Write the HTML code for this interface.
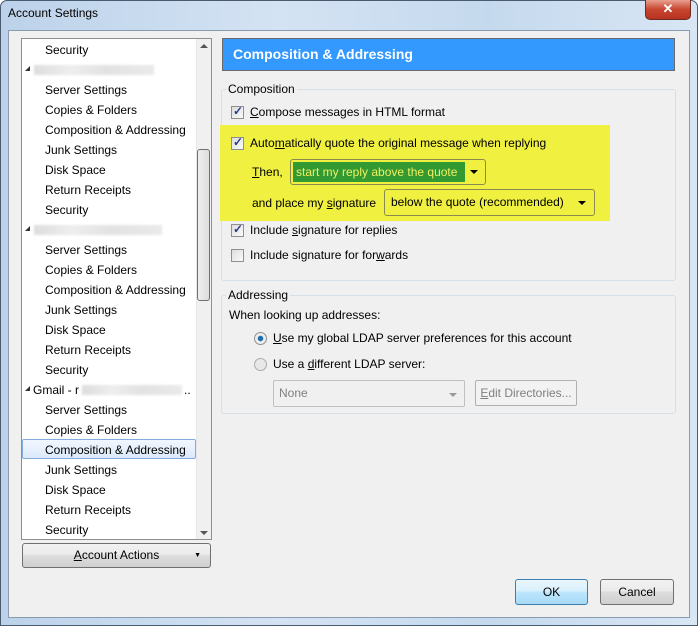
<!DOCTYPE html><html><head><style>
*{box-sizing:border-box;margin:0;padding:0}
body{width:698px;height:626px;overflow:hidden;background:#fff;font-family:"Liberation Sans",sans-serif;font-size:12px;color:#000;position:relative}
.a{position:absolute}
.frame{left:0;top:0;width:698px;height:626px;border:1px solid #4a5b70;border-radius:7px 7px 0 0;background:linear-gradient(90deg,#bcd2ea,#d4e3f3 40%,#c5d9ee 70%,#d8e6f4)}
.client{left:8px;top:30px;width:682px;height:588px;background:#f0f0f0;border:1px solid #8a9bb0}
.tree{left:21px;top:38px;width:191px;height:502px;background:#fff;border:1px solid #8e8f8f}
.row{position:absolute;left:23px;height:20px;line-height:20px;font-size:12px}
.hdr{position:absolute;left:12px;height:10px;width:120px;background:linear-gradient(90deg,#ddd,#eee 30%,#e2e2e2 60%,#eaeaea);filter:blur(1px)}
.tri{position:absolute;left:3px;width:0;height:0;border-left:5px solid transparent;border-bottom:5px solid #333}
.btn{border:1px solid #707070;border-radius:3px;background:linear-gradient(#f2f2f2,#ebebeb 45%,#dddddd 50%,#cfcfcf);text-align:center}
.cb{position:absolute;width:13px;height:13px;border:1px solid #8e8f8f;background:linear-gradient(135deg,#ddd,#fafafa)}
.cb.c::after{content:"✓";position:absolute;left:1px;top:-3px;font-size:12px;color:#2a3a8a;font-weight:bold}
.grp{border:1px solid #d5dfe5;border-radius:3px}
u{text-decoration:underline}
</style></head><body>
<div class="a frame"></div>
<div class="a" style="left:8px;top:6px;font-size:12px;">Account Settings</div>
<div class="a" style="left:645px;top:0;width:46px;height:20px;border:1px solid #6d2a22;border-top:none;border-radius:0 0 5px 5px;background:linear-gradient(#e8a090,#c7452f 50%,#b83220);color:#fff;text-align:center;font-weight:bold;font-size:13px;line-height:18px">✕</div>
<div class="a client"></div>

<div class="a tree">
 <div class="row" style="top:1px">Security</div>
 <div class="tri" style="top:27px"></div><div class="hdr" style="top:26px"></div>
 <div class="row" style="top:41px">Server Settings</div>
 <div class="row" style="top:61px">Copies &amp; Folders</div>
 <div class="row" style="top:81px">Composition &amp; Addressing</div>
 <div class="row" style="top:101px">Junk Settings</div>
 <div class="row" style="top:121px">Disk Space</div>
 <div class="row" style="top:141px">Return Receipts</div>
 <div class="row" style="top:161px">Security</div>
 <div class="tri" style="top:187px"></div><div class="hdr" style="top:186px;width:128px"></div>
 <div class="row" style="top:201px">Server Settings</div>
 <div class="row" style="top:221px">Copies &amp; Folders</div>
 <div class="row" style="top:241px">Composition &amp; Addressing</div>
 <div class="row" style="top:261px">Junk Settings</div>
 <div class="row" style="top:281px">Disk Space</div>
 <div class="row" style="top:301px">Return Receipts</div>
 <div class="row" style="top:321px">Security</div>
 <div class="tri" style="top:347px"></div><div class="row" style="top:341px;left:11px">Gmail - r</div><div class="hdr" style="top:346px;left:60px;width:100px"></div><div class="row" style="top:341px;left:162px">..</div>
 <div class="row" style="top:361px">Server Settings</div>
 <div class="row" style="top:381px">Copies &amp; Folders</div>
 <div class="a" style="left:0;top:400px;width:174px;height:20px;border:1px solid #84acdd;border-radius:2px;background:linear-gradient(#f2f7fe,#dbe9fb)"></div>
 <div class="row" style="top:401px">Composition &amp; Addressing</div>
 <div class="row" style="top:421px">Junk Settings</div>
 <div class="row" style="top:441px">Disk Space</div>
 <div class="row" style="top:461px">Return Receipts</div>
 <div class="row" style="top:481px">Security</div>
 <div class="a" style="left:174px;top:0;width:15px;height:500px;background:#f0f0f0;border-left:1px solid #e6e6e6"></div>
 <div class="a" style="left:178px;top:5px;border-left:4px solid transparent;border-right:4px solid transparent;border-bottom:4px solid #555"></div>
 <div class="a" style="left:178px;top:492px;border-left:4px solid transparent;border-right:4px solid transparent;border-top:4px solid #555"></div>
 <div class="a btn" style="left:175px;top:110px;width:13px;height:152px;background:linear-gradient(90deg,#eee,#ddd)"></div>
</div>
<div class="a btn" style="left:22px;top:543px;width:189px;height:25px;line-height:23px"><u>A</u>ccount Actions<span style="position:absolute;right:9px;top:0;font-size:7px">▼</span></div>

<div class="a" style="left:222px;top:38px;width:453px;height:33px;background:#3399ff;border:1px solid #6a6a6a;color:#fff;font-weight:bold;font-size:14px;line-height:31px;padding-left:10px">Composition &amp; Addressing</div>

<div class="a grp" style="left:221px;top:89px;width:455px;height:192px"></div>
<div class="a" style="left:226px;top:82px;background:#f0f0f0;padding:0 2px">Composition</div>
<div class="cb c" style="left:231px;top:106px"></div>
<div class="a" style="left:250px;top:105px"><u>C</u>ompose messages in HTML format</div>
<div class="a" style="left:220px;top:125px;width:390px;height:96px;background:#eff03f"></div>
<div class="cb c" style="left:231px;top:137px"></div>
<div class="a" style="left:250px;top:136px">Auto<u>m</u>atically quote the original message when replying</div>
<div class="a" style="left:252px;top:165px"><u>T</u>hen,</div>
<div class="a" style="left:290px;top:159px;width:196px;height:26px;border:1px solid #8a8a50;border-radius:3px"></div>
<div class="a" style="left:293px;top:162px;width:172px;height:20px;background:#339933;color:#f0f060;line-height:20px;padding-left:3px;font-size:12px">start my reply above the quote</div>
<div class="a" style="left:470px;top:170px;border-left:4px solid transparent;border-right:4px solid transparent;border-top:4px solid #000"></div>
<div class="a" style="left:252px;top:196px">and place my <u>s</u>ignature</div>
<div class="a" style="left:384px;top:189px;width:211px;height:27px;border:1px solid #8a8a50;border-radius:3px;line-height:25px;padding-left:6px">below the quote (recommended)</div>
<div class="a" style="left:578px;top:201px;border-left:4px solid transparent;border-right:4px solid transparent;border-top:4px solid #000"></div>
<div class="cb c" style="left:231px;top:224px"></div>
<div class="a" style="left:250px;top:223px">Include <u>s</u>ignature for replies</div>
<div class="cb" style="left:231px;top:249px"></div>
<div class="a" style="left:250px;top:248px">Include signature for for<u>w</u>ards</div>

<div class="a grp" style="left:221px;top:295px;width:455px;height:119px"></div>
<div class="a" style="left:226px;top:288px;background:#f0f0f0;padding:0 2px">Addressing</div>
<div class="a" style="left:229px;top:308px">When looking up addresses:</div>
<div class="a" style="left:254px;top:332px;width:13px;height:13px;border-radius:50%;border:1px solid #8e8f8f;background:radial-gradient(#1a6fb0 30%,#eee 40%)"></div>
<div class="a" style="left:273px;top:331px"><u>U</u>se my global LDAP server preferences for this account</div>
<div class="a" style="left:254px;top:358px;width:13px;height:13px;border-radius:50%;border:1px solid #aaa;background:#e8e8e8"></div>
<div class="a" style="left:273px;top:357px">Use a <u>d</u>ifferent LDAP server:</div>
<div class="a" style="left:273px;top:380px;width:192px;height:27px;border:1px solid #c0c0c0;border-radius:2px;background:#f0f0f0;color:#808080;line-height:25px;padding-left:5px">None</div>
<div class="a" style="left:449px;top:393px;border-left:4px solid transparent;border-right:4px solid transparent;border-top:4px solid #999"></div>
<div class="a" style="left:475px;top:380px;width:102px;height:26px;border:1px solid #b0b0b0;border-radius:2px;background:#f2f2f2;color:#808080;line-height:24px;text-align:center"><u>E</u>dit Directories...</div>

<div class="a btn" style="left:515px;top:579px;width:73px;height:26px;line-height:24px;border-color:#3c7fb1;background:linear-gradient(#eaf6fd,#d9f0fc 45%,#bee6fd 50%,#a7d9f5)">OK</div>
<div class="a btn" style="left:600px;top:579px;width:74px;height:26px;line-height:24px">Cancel</div>
</body></html>
